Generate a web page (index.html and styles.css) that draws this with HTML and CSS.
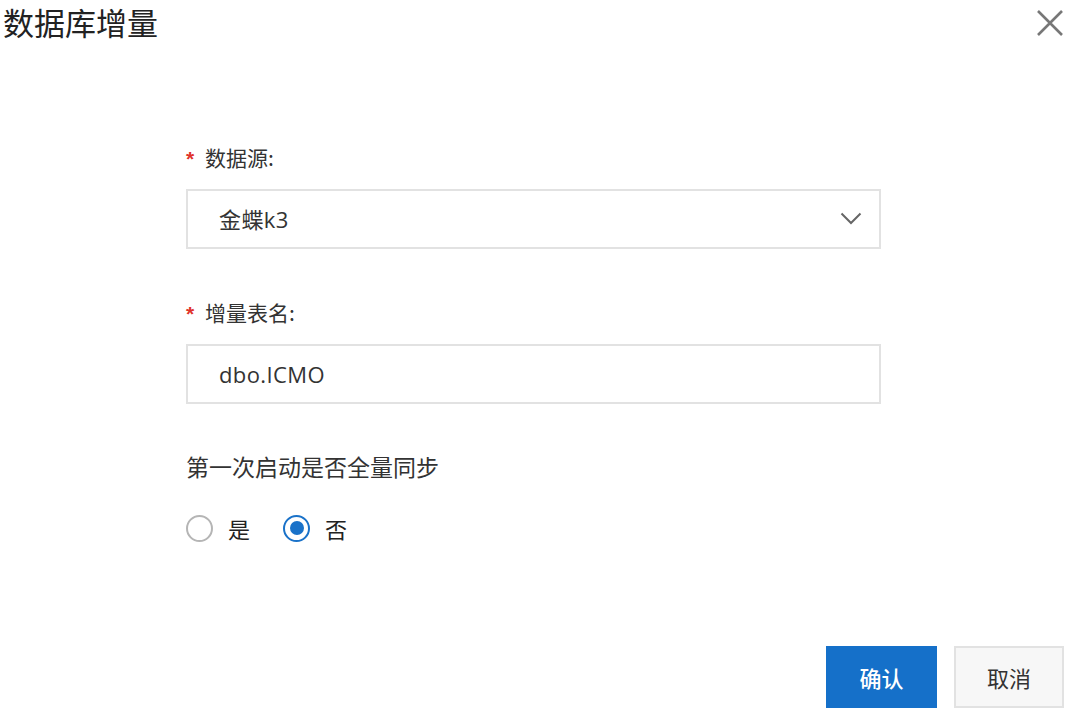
FILE: index.html
```html
<!DOCTYPE html>
<html lang="zh-CN">
<head>
<meta charset="utf-8">
<title>数据库增量</title>
<link rel="stylesheet" href="styles.css">
</head>
<body>
<div class="dialog">
  <div class="header">
    <h1 class="title">数据库增量</h1>
    <button class="close" aria-label="关闭">
      <svg width="28" height="28" viewBox="0 0 28 28"><path d="M2 2 L26 26 M26 2 L2 26" stroke="#777" stroke-width="2.6" fill="none" stroke-linecap="butt"/></svg>
    </button>
  </div>
  <div class="form">
    <div class="label label-first"><span class="req">*</span>数据源:</div>
    <div class="field select">
      <span class="value">金蝶k3</span>
      <svg class="chevron" width="22" height="14" viewBox="0 0 22 14"><path d="M1.5 1.5 L11 11 L20.5 1.5" stroke="#666" stroke-width="2" fill="none"/></svg>
    </div>
    <div class="label label-next"><span class="req">*</span>增量表名:</div>
    <div class="field input">
      <span class="value">dbo.ICMO</span>
    </div>
    <div class="label label-plain">第一次启动是否全量同步</div>
    <div class="radios">
      <label class="radio"><span class="circle"></span><span class="rtext">是</span></label>
      <label class="radio checked"><span class="circle"></span><span class="rtext">否</span></label>
    </div>
  </div>
  <div class="footer">
    <button class="btn btn-primary">确认</button>
    <button class="btn btn-default">取消</button>
  </div>
</div>
</body>
</html>
```

FILE: styles.css
```css
* { box-sizing: border-box; }
html, body { margin: 0; padding: 0; background: #fff; }
body {
  font-family: "Open Sans", "Noto Sans CJK SC", sans-serif;
  color: #333;
  width: 1083px;
  height: 722px;
  overflow: hidden;
}
.dialog { display: flex; flex-direction: column; }
.header {
  display: flex;
  justify-content: space-between;
  align-items: flex-start;
  height: 44px;
}
.title {
  margin: 0;
  padding-left: 3px;
  font-family: "Noto Sans CJK SC", sans-serif;
  font-size: 31px;
  font-weight: 400;
  line-height: 44px;
  color: #222;
}
.close {
  margin: 9px 19px 0 0;
  padding: 0;
  border: 0;
  background: none;
  width: 28px;
  height: 28px;
  display: flex;
}
.form {
  margin-left: 186px;
  width: 695px;
  display: flex;
  flex-direction: column;
}
.label {
  font-size: 21px;
  line-height: 30px;
  height: 30px;
  color: #333;
  font-family: "Noto Sans CJK SC", sans-serif;
  display: flex;
  align-items: center;
}
.label-first { margin-top: 98px; margin-bottom: 17px; }
.label-next { margin-top: 48px; margin-bottom: 17px; }
.label-plain { margin-top: 47px; font-size: 23px; }
.req {
  color: #e0332b;
  font-family: "Liberation Sans", sans-serif;
  font-size: 21px;
  font-weight: 700;
  width: 19px;
  line-height: 1;
  position: relative;
  top: 1px;
}
.field {
  height: 60px;
  border: 2px solid #e2e2e2;
  display: flex;
  align-items: center;
  justify-content: space-between;
  padding: 0 17px 0 31px;
  font-size: 22px;
  color: #333;
}
.value { line-height: 30px; letter-spacing: 0.4px; }
.chevron { display: block; }
.radios {
  margin-top: 32px;
  height: 30px;
  display: flex;
  align-items: center;
  gap: 33px;
}
.radio {
  display: flex;
  align-items: center;
  gap: 15px;
  font-family: "Noto Sans CJK SC", sans-serif;
  font-size: 22px;
  color: #222;
}
.circle {
  width: 27px;
  height: 27px;
  border-radius: 50%;
  border: 2px solid #b5b5b5;
  display: flex;
  align-items: center;
  justify-content: center;
}
.radio.checked .circle { border: 2.5px solid #1a72c9; }
.radio.checked .circle::after {
  content: "";
  width: 14px;
  height: 14px;
  border-radius: 50%;
  background: #1a72c9;
}
.rtext { line-height: 30px; }
.footer {
  margin-top: 103px;
  display: flex;
  justify-content: flex-end;
  gap: 17px;
  padding-right: 19px;
}
.btn {
  height: 62px;
  font-family: "Noto Sans CJK SC", sans-serif;
  font-size: 22px;
  border-radius: 0;
  padding: 0;
}
.btn-primary {
  width: 111px;
  background: #1570c9;
  border: 1px solid #1570c9;
  color: #fff;
  font-weight: 500;
}
.btn-default {
  width: 110px;
  background: #f7f7f7;
  border: 2px solid #e2e2e2;
  color: #333;
}
```
